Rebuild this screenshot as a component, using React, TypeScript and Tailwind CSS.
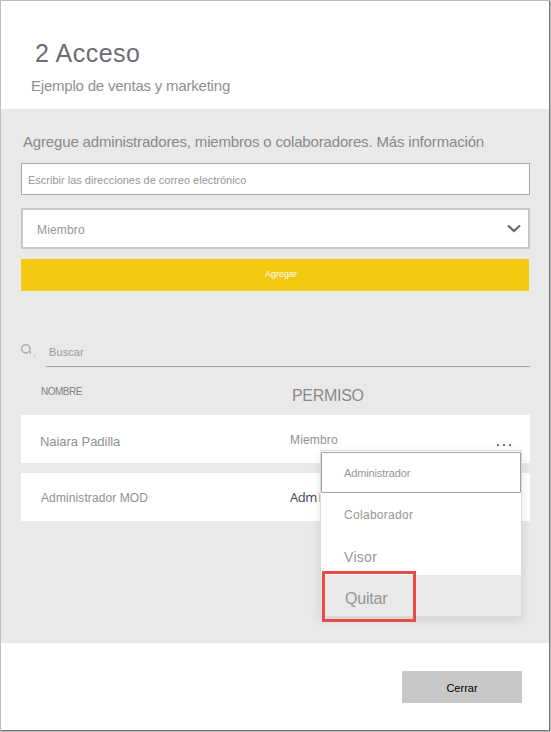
const members = [
  { name: 'Naiara Padilla', style: 'text-[13px] tracking-[-0.05px] pl-[19px] leading-[53px]' },
  { name: 'Administrador MOD', style: 'text-[12px] tracking-[0.1px] pl-[20px] leading-[50px]' },
];

function Header() {
  return (
    <header className="h-[108px] shrink-0 bg-white pt-[36px]">
      <h1 className="pl-[34px] text-[25px] leading-[32px] tracking-[0.5px] whitespace-nowrap text-[#6d6c71]">2 Acceso</h1>
      <p className="pt-[8px] pl-[30px] text-[15px] leading-[18px] tracking-[-0.21px] whitespace-nowrap text-[#8f8f91]">
        Ejemplo de ventas y marketing
      </p>
    </header>
  );
}

function RoleMenu() {
  return (
    <div className="absolute top-[36px] left-[300px] z-10 h-[165px] w-[200px] bg-white pt-px shadow-[0_0_0_1px_#dcdcdc,0_3px_10px_rgba(0,0,0,0.13)]">
      <div className="h-[41px] rounded-[1px] border border-[#a0a0a0] pl-[22px] text-[11px] leading-[40px] tracking-[-0.13px] whitespace-nowrap text-[#969696]">
        Administrador
      </div>
      <div className="h-[41px] pl-[23px] text-[12px] leading-[45px] tracking-[0.3px] text-[#969696]">Colaborador</div>
      <div className="h-[41px] pl-[23px] text-[14px] leading-[46px] tracking-[0.3px] text-[#969696]">Visor</div>
      <div className="h-[41px] bg-[#e9e9e9] pl-[24px] text-[16px] leading-[48px] tracking-[-0.2px] text-[#969696]">Quitar</div>
      <div className="absolute top-[120px] left-px h-[51px] w-[94px] border-3 border-[#e84c46]" />
    </div>
  );
}

export default function App() {
  return (
    <div className="h-[732px] w-[551px] border border-[#bcbcbc] font-['Liberation_Sans',Arial,sans-serif]">
      <div className="flex h-[730px] w-[549px] flex-col border-r border-b border-[#747474] bg-white">
        <Header />
        <main className="flex h-[534px] shrink-0 flex-col bg-[#e9e9e9] pl-[20px]">
          <p className="h-[54px] pt-[24px] pl-[2px] text-[15px] leading-[18px] tracking-[-0.165px] whitespace-nowrap text-[#8a8a8a]">
            Agregue administradores, miembros o colaboradores. Más información
          </p>
          <div className="h-[32px] w-[509px] border border-[#a8a8a8] bg-white pl-[6px] text-[11px] leading-[33px] text-[#969699]">
            Escribir las direcciones de correo electrónico
          </div>
          <div className="mt-[13px] flex h-[41px] w-[509px] justify-between border-2 border-[#c8c8c8] bg-white pr-[7px] pl-[14px] text-[12px] leading-[40px] tracking-[0.15px] text-[#969699]">
            <span>Miembro</span>
            <svg className="mt-[14px] h-[10px] w-[14px]" viewBox="0 0 14 10" fill="none" stroke="#666" strokeWidth="2.2">
              <path d="M1 1.5L7 7L13 1.5" />
            </svg>
          </div>
          <button className="mt-[10px] flex h-[32px] w-[508px] justify-center bg-[#f2c811] pl-[12px] text-[9px] leading-[30px] text-white">
            Agregar
          </button>
          <div className="mt-[45px] flex h-[31px] w-[509px]">
            <svg className="mt-[7px] h-[16px] w-[16px]" viewBox="0 0 16 16" fill="none">
              <circle cx="4.8" cy="5.8" r="4.2" stroke="#a9a9a9" strokeWidth="1.3" />
              <path d="M9.5 8V11" stroke="#b2aca5" />
              <path d="M13 13.5H14.2" stroke="#9fb4cf" />
            </svg>
            <div className="ml-[9px] flex-1 border-b border-[#a6a6a6] pl-[3px] text-[11px] leading-[32px] tracking-[0.1px] text-[#9a9a9a]">
              Buscar
            </div>
          </div>
          <div className="flex h-[48px] w-[509px]">
            <div className="w-[250px] pl-[20px] text-[10px] leading-[49px] tracking-[-0.5px] text-[#828282]">NOMBRE</div>
            <div className="pl-[21px] text-[16px] leading-[58px] tracking-[-0.3px] text-[#8a8a8a]">PERMISO</div>
          </div>
          <div className="relative flex w-[509px] flex-col gap-[10px]">
            {members.map((member, i) => (
              <div key={member.name} className="flex h-[48px] bg-white text-[#8f8f93]">
                <div className={`w-[250px] ${member.style}`}>{member.name}</div>
                {i === 0 ? (
                  <>
                    <div className="flex-1 pl-[19px] text-[12px] leading-[50px] tracking-[0.15px]">Miembro</div>
                    <div className="mt-[29px] mr-[19px] flex h-[2px] w-[14px] justify-between">
                      <span className="size-[2px] bg-[#5877a8]" />
                      <span className="size-[2px] bg-[#5877a8]" />
                      <span className="size-[2px] bg-[#5877a8]" />
                    </div>
                  </>
                ) : (
                  <div className="pl-[19px] font-['Open_Sans',sans-serif] text-[13px] leading-[49px] tracking-[-0.5px] text-[#414359]">
                    Adm<span className="pl-[1.5px] text-[#c9a67c]">i</span>
                  </div>
                )}
              </div>
            ))}
            <RoleMenu />
          </div>
        </main>
        <footer className="flex justify-end pt-[28px] pr-[27px]">
          <button className="h-[32px] w-[120px] bg-[#c8c8c8] text-[11px] leading-[34px] text-black">Cerrar</button>
        </footer>
      </div>
    </div>
  );
}
